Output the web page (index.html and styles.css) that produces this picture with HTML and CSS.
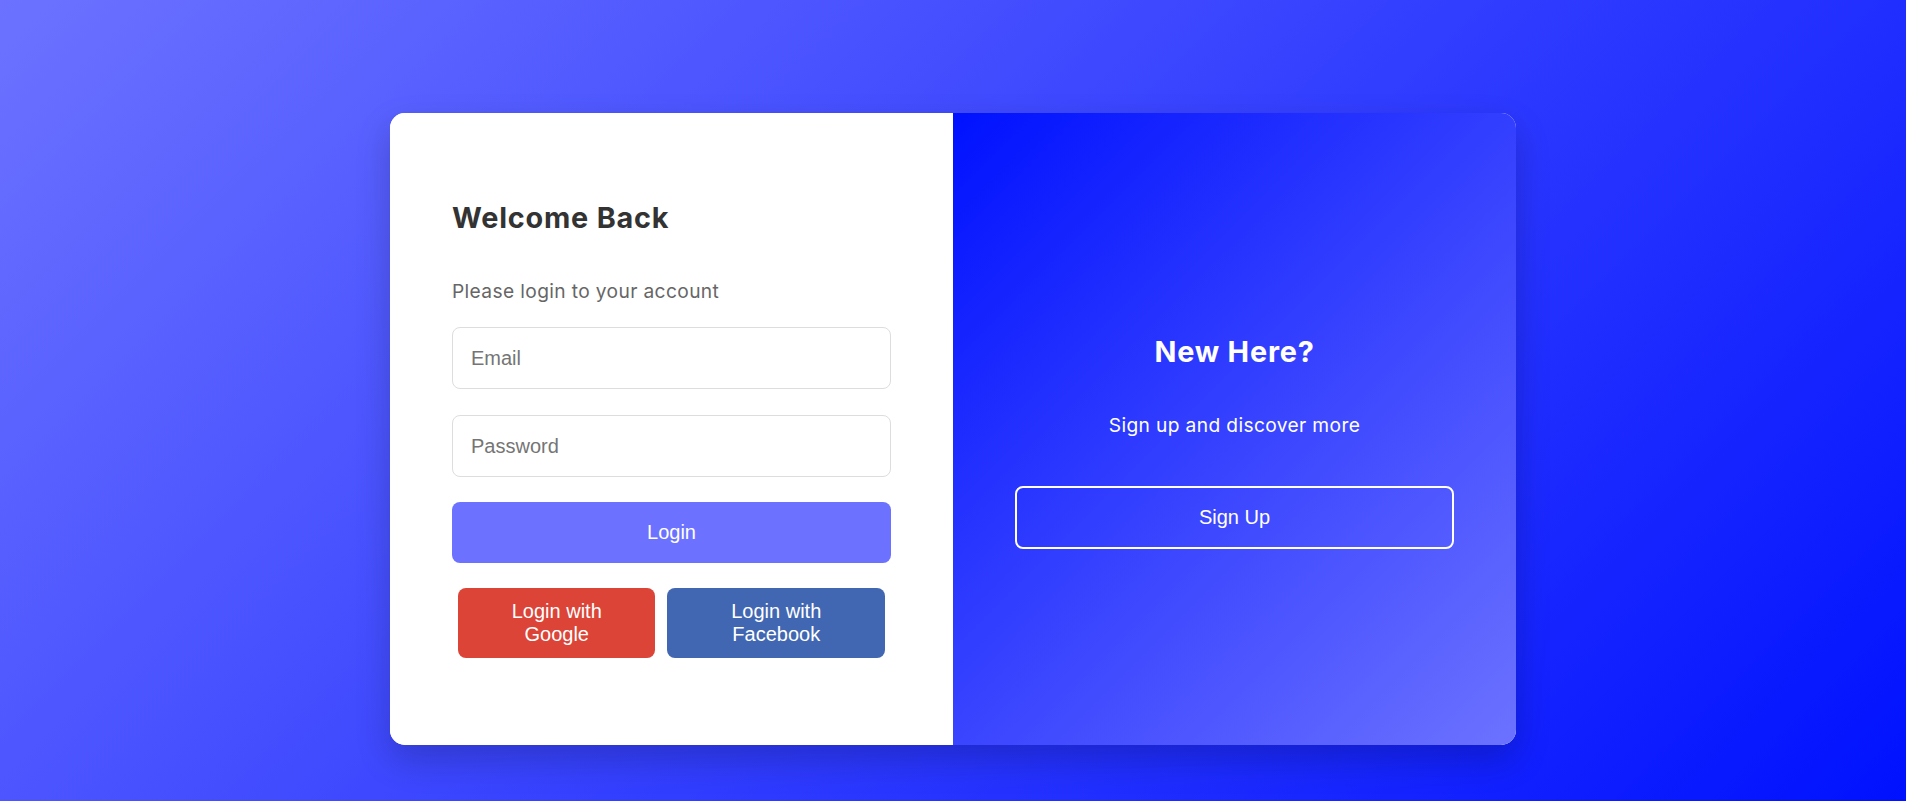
FILE: index.html
```html
<!DOCTYPE html>
<html lang="en">
<head>
<meta charset="utf-8">
<title>Login</title>
<link rel="stylesheet" href="styles.css">
</head>
<body>
<div class="page">
  <div class="card">
    <div class="panel login">
      <h2 class="title">Welcome Back</h2>
      <p class="subtitle">Please login to your account</p>
      <form class="form">
        <input class="field" type="email" placeholder="Email">
        <input class="field" type="password" placeholder="Password">
        <button class="btn-primary" type="button">Login</button>
        <div class="social">
          <button class="btn-social google" type="button">Login with Google</button>
          <button class="btn-social facebook" type="button">Login with Facebook</button>
        </div>
      </form>
    </div>
    <div class="panel signup">
      <h2 class="title title-light">New Here?</h2>
      <p class="subtitle subtitle-light">Sign up and discover more</p>
      <button class="btn-ghost" type="button">Sign Up</button>
    </div>
  </div>
</div>
</body>
</html>
```

FILE: styles.css
```css
* {
  box-sizing: border-box;
}

html, body {
  margin: 0;
  padding: 0;
}

body {
  min-height: 100vh;
  font-family: Inter, "Noto Sans", sans-serif;
  background: linear-gradient(135deg, #6c72ff 0%, #0011ff 100%);
}

.page {
  padding-top: 113px;
  min-height: 100vh;
}

.card {
  width: 1126px;
  margin: 0 auto;
  display: flex;
  background: #fff;
  border-radius: 15px;
  overflow: hidden;
  box-shadow: 0 15px 35px rgba(0, 0, 0, 0.2);
}

.panel {
  flex: 1 1 0;
  display: flex;
  flex-direction: column;
  padding: 87px 62px;
}

.login {
  background: #fff;
}

.signup {
  background: linear-gradient(135deg, #0011ff 0%, #6c72ff 100%);
  justify-content: center;
  align-items: stretch;
  text-align: center;
}

.title {
  margin: 0 0 45px;
  font-family: Inter, sans-serif;
  font-weight: 700;
  font-size: 28.8px;
  line-height: 35px;
  letter-spacing: 0.8px;
  color: #333;
}

.title-light {
  color: #fff;
  margin-top: 24px;
}

.subtitle {
  margin: 0 0 25px;
  font-family: Inter, sans-serif;
  font-size: 19.2px;
  line-height: 22px;
  letter-spacing: 0.36px;
  color: #666;
}

.subtitle-light {
  color: #fff;
  margin-bottom: 50px;
}

.form {
  display: flex;
  flex-direction: column;
  gap: 25px;
  margin: 0;
}

.field {
  display: block;
  width: 100%;
  padding: 18px 18px;
  border: 1px solid #ddd;
  border-radius: 8px;
  font-family: "Liberation Sans", Arial, sans-serif;
  font-size: 20px;
  line-height: 24px;
  color: #333;
  background: #fff;
  outline: none;
}

.field + .field {
  margin-top: 1px;
}

.field::placeholder {
  color: #757575;
}

.btn-primary {
  display: block;
  width: 100%;
  padding: 19px 0;
  border: none;
  border-radius: 8px;
  background: #6c72ff;
  color: #fff;
  font-family: "Liberation Sans", Arial, sans-serif;
  font-size: 20px;
  line-height: 23px;
  cursor: pointer;
}

.social {
  display: flex;
}

.btn-social {
  flex: 0 1 auto;
  margin: 0 6px;
  padding: 12px 30px;
  border: none;
  border-radius: 8px;
  color: #fff;
  font-family: "Liberation Sans", Arial, sans-serif;
  font-size: 20px;
  line-height: 23px;
  text-align: center;
  cursor: pointer;
}

.google {
  background: #db4437;
}

.facebook {
  background: #4267b2;
}

.btn-ghost {
  display: block;
  width: 100%;
  padding: 18px 0;
  border: 2px solid #fff;
  border-radius: 8px;
  background: transparent;
  color: #fff;
  font-family: "Liberation Sans", Arial, sans-serif;
  font-size: 20px;
  line-height: 23px;
  cursor: pointer;
}
```
